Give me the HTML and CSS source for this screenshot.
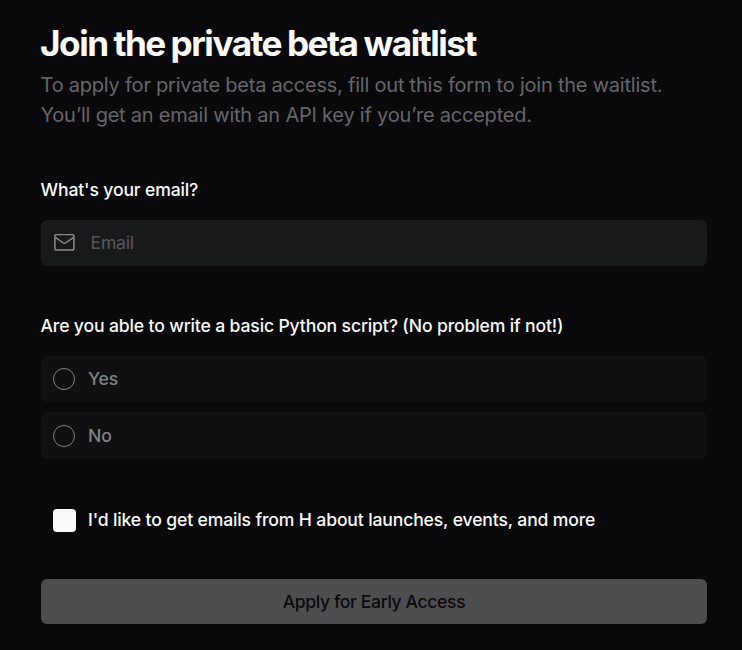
FILE: index.html
```html
<!DOCTYPE html>
<html lang="en">
<head>
  <meta charset="UTF-8">
  <title>Join the private beta waitlist</title>
  <link rel="stylesheet" href="styles.css">
</head>
<body>

  <form class="waitlist">
    <h1>Join the private beta waitlist</h1>
    <p class="intro">To apply for private beta access, fill out this form to join the waitlist.<br>You’ll get an email with an API key if you’re accepted.</p>

    <label class="question" for="email">What's your email?</label>
    <div class="field">
      <svg class="mail" width="21" height="19" viewBox="0 0 21 19" fill="none" stroke="currentColor" stroke-width="1.5" stroke-linejoin="round">
        <rect x="0.9" y="0.5" width="19" height="15.6" rx="1.8"/>
        <path d="M1.2 3.4 L9.4 9 Q10.4 9.7 11.4 9 L19.6 3.4"/>
      </svg>
      <input type="email" id="email" placeholder="Email">
    </div>

    <div class="question">Are you able to write a basic Python script? (No problem if not!)</div>
    <div class="options">
      <label class="option"><input type="radio" name="python" value="yes">Yes</label>
      <label class="option"><input type="radio" name="python" value="no">No</label>
    </div>

    <label class="emails"><input type="checkbox">I'd like to get emails from H about launches, events, and more</label>

    <button type="button">Apply for Early Access</button>
  </form>

</body>
</html>
```
FILE: styles.css
```css
* {
  box-sizing: border-box;
}
body {
  margin: 0;
  background-color: #09090b;
  color: #fafafa;
  font-family: Inter, sans-serif;
}
.waitlist {
  display: flex;
  flex-direction: column;
  width: 742px;
  padding: 23px 35px 26px 41px;
}
h1 {
  margin: 0 0 0 -1px;
  font-size: 35.2px;
  line-height: 40px;
  font-weight: 700;
  letter-spacing: -1.5px;
  word-spacing: -1px;
}
.intro {
  margin: 7px 0 0 -0.5px;
  color: #66666a;
  font-size: 20px;
  line-height: 30px;
  letter-spacing: -0.22px;
}
.question {
  margin: 48px 0 0 -0.5px;
  font-size: 17.6px;
  line-height: 24px;
  font-weight: 500;
  letter-spacing: -0.15px;
}
.field {
  display: flex;
  align-items: center;
  height: 46px;
  margin-top: 18px;
  padding: 0 13px;
  gap: 15.5px;
  border-radius: 6px;
  background-color: #18191b;
}
.mail {
  color: #8b8b8d;
}
.field input {
  flex: 1;
  padding: 0 0 2px;
  border: 0;
  outline: 0;
  background: none;
  color: #fafafa;
  font: 400 17.6px Inter, sans-serif;
  letter-spacing: -0.2px;
}
.field input::placeholder {
  color: #58585b;
}
.options {
  display: flex;
  flex-direction: column;
  gap: 10px;
  margin-top: 18px;
}
.option {
  display: flex;
  align-items: center;
  gap: 13px;
  height: 46px;
  padding: 0 12px;
  border-radius: 6px;
  background-color: #101012;
  color: #828284;
  font-size: 17.6px;
  line-height: 22px;
  font-weight: 500;
  letter-spacing: -0.16px;
}
.option:last-child {
  height: 47px;
}
.option input {
  appearance: none;
  width: 22px;
  height: 22px;
  margin: 0;
  border: 1px solid #828284;
  border-radius: 50%;
}
.emails {
  display: flex;
  align-items: flex-start;
  gap: 12px;
  height: 23px;
  margin-top: 50px;
  padding-left: 12px;
  font-size: 17.6px;
  line-height: 21px;
  font-weight: 500;
  letter-spacing: -0.15px;
}
.emails input {
  appearance: none;
  width: 23px;
  height: 23px;
  margin: 0;
  border-radius: 4px;
  background-color: #fafafa;
}
button {
  height: 45px;
  margin-top: 47px;
  border: 0;
  border-radius: 6px;
  background-color: #4e4e50;
  color: #09090b;
  font: 500 17.6px Inter, sans-serif;
  letter-spacing: -0.38px;
}
```
